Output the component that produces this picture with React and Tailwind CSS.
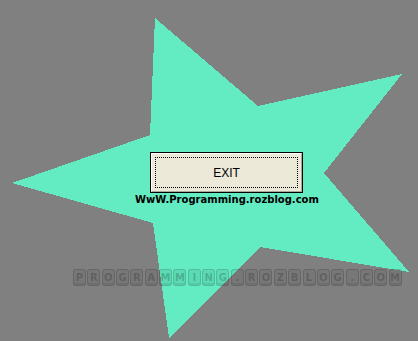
import React from "react";

const WM = "PROGRAMMING.ROZBLOG.COM".split("");

export default function App() {
  return (
    <div className="relative w-[418px] h-[341px] overflow-hidden bg-[#808080]" style={{ fontFamily: "'DejaVu Sans', sans-serif" }}>
      <svg className="absolute inset-0" width="418" height="341" viewBox="0 0 418 341" shapeRendering="crispEdges">
        <polygon
          points="155,18 258,106 402,74 324,173 409,272 260,247 169,338 153,223 12,183 150,135"
          fill="#63ebc1"
        />
      </svg>
      <div className="relative flex flex-col pt-[152px]">
        <div className="pl-[150px]">
          <button className="w-[153px] h-[41px] border border-black bg-[#ece9d8] p-0 flex">
            <div className="flex-1 border-t border-l border-t-white border-l-white border-b border-r border-b-[#aca899] border-r-[#aca899] p-[3px] flex">
              <div className="flex-1 border border-dotted border-black flex items-center justify-center">
                <span className="text-[12px] text-black leading-none" style={{ fontFamily: "'Liberation Sans', sans-serif" }}>EXIT</span>
              </div>
            </div>
          </button>
        </div>
        <div className="pl-[135px] h-[14px] flex items-center">
          <span className="text-[10px] font-bold text-black leading-none">WwW.Programming.rozblog.com</span>
        </div>
        <div className="pl-[73px] mt-[62px] flex gap-[1.35px]">
          {WM.map((c, i) => (
            <div
              key={i}
              className="w-[13px] h-[17px] rounded-[3px] bg-black/[0.07] border border-black/[0.14] shadow-[inset_0_-2px_0_rgba(0,0,0,0.08)] flex items-center justify-center text-[10px] font-bold text-black/[0.2] leading-none"
            >
              {c}
            </div>
          ))}
        </div>
      </div>
    </div>
  );
}
